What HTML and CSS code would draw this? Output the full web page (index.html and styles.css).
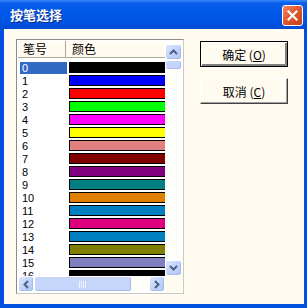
FILE: index.html
```html
<!DOCTYPE html>
<html lang="zh-CN">
<head>
	<meta charset="UTF-8">
	<title>按笔选择</title>
	<link rel="stylesheet" href="styles.css">
</head>
<body>

<div class="window">
	<div class="titlebar">
		<span class="title">按笔选择</span>
		<span class="close">
			<svg width="11" height="11" viewBox="0 0 11 11"><path d="M1.5 1.5 L9.5 9.5 M9.5 1.5 L1.5 9.5" stroke="#fff" stroke-width="2.2" stroke-linecap="square"/></svg>
		</span>
	</div>
	<div class="client">
		<div class="listview">
			<div class="lv-main">
				<div class="lv-header">
					<div class="hd-num">笔号</div>
					<div class="hd-color">颜色</div>
				</div>
				<div class="lv-rows">
					<div class="row selected"><span class="num">0</span><span class="bar" style="background:#000000"></span></div>
					<div class="row"><span class="num">1</span><span class="bar" style="background:#0000ff"></span></div>
					<div class="row"><span class="num">2</span><span class="bar" style="background:#ff0000"></span></div>
					<div class="row"><span class="num">3</span><span class="bar" style="background:#00ff00"></span></div>
					<div class="row"><span class="num">4</span><span class="bar" style="background:#ff00ff"></span></div>
					<div class="row"><span class="num">5</span><span class="bar" style="background:#ffff00"></span></div>
					<div class="row"><span class="num">6</span><span class="bar" style="background:#e08080"></span></div>
					<div class="row"><span class="num">7</span><span class="bar" style="background:#800000"></span></div>
					<div class="row"><span class="num">8</span><span class="bar" style="background:#800080"></span></div>
					<div class="row"><span class="num">9</span><span class="bar" style="background:#008080"></span></div>
					<div class="row"><span class="num">10</span><span class="bar" style="background:#e08000"></span></div>
					<div class="row"><span class="num">11</span><span class="bar" style="background:#0080c0"></span></div>
					<div class="row"><span class="num">12</span><span class="bar" style="background:#e0007f"></span></div>
					<div class="row"><span class="num">13</span><span class="bar" style="background:#0080c0"></span></div>
					<div class="row"><span class="num">14</span><span class="bar" style="background:#808000"></span></div>
					<div class="row"><span class="num">15</span><span class="bar" style="background:#8080c0"></span></div>
					<div class="row"><span class="num">16</span><span class="bar" style="background:#000000"></span></div>
				</div>
			</div>
			<div class="vscroll">
				<div class="sb-btn">
					<svg width="9" height="6" viewBox="0 0 9 6"><path d="M1 5 L4.5 1.5 L8 5" fill="none" stroke="#4d6185" stroke-width="2"/></svg>
				</div>
				<div class="sb-thumb-v"></div>
				<div class="sb-track"></div>
				<div class="sb-btn">
					<svg width="9" height="6" viewBox="0 0 9 6"><path d="M1 1 L4.5 4.5 L8 1" fill="none" stroke="#4d6185" stroke-width="2"/></svg>
				</div>
			</div>
			<div class="hscroll">
				<div class="sb-btn">
					<svg width="6" height="9" viewBox="0 0 6 9"><path d="M5 1 L1.5 4.5 L5 8" fill="none" stroke="#4d6185" stroke-width="2"/></svg>
				</div>
				<div class="sb-thumb-h">
					<svg width="8" height="7" viewBox="0 0 8 7"><path d="M0.5 0 V7 M2.5 0 V7 M4.5 0 V7 M6.5 0 V7" stroke="#eef4fe" stroke-width="1"/></svg>
				</div>
				<div class="sb-track"></div>
				<div class="sb-btn">
					<svg width="6" height="9" viewBox="0 0 6 9"><path d="M1 1 L4.5 4.5 L1 8" fill="none" stroke="#4d6185" stroke-width="2"/></svg>
				</div>
			</div>
			<div class="sb-corner"></div>
		</div>
		<div class="buttons">
			<button class="btn default">确定 (<u>O</u>)</button>
			<button class="btn">取消 (<u>C</u>)</button>
		</div>
	</div>
</div>

</body>
</html>
```

FILE: styles.css
```css
body {
	margin: 0;
	font-family: "Liberation Sans", "Noto Sans CJK SC", sans-serif;
	font-size: 11px;
}
.window {
	width: 307px;
	height: 308px;
	display: flex;
	flex-direction: column;
	background: #0350e0;
}
.titlebar {
	height: 29px;
	flex: none;
	display: flex;
	align-items: center;
	justify-content: space-between;
	padding: 0 4px 0 10px;
	background: linear-gradient(to bottom, #3a8cff 0px, #0a5fe9 3px, #0058e8 12px, #0054e2 22px, #0049d4 29px);
}
.title {
	color: #fff;
	font-family: "Noto Sans CJK SC", sans-serif;
	font-weight: bold;
	font-size: 13px;
	text-shadow: 1px 1px #0b2a8a;
}
.close {
	width: 19px;
	height: 19px;
	display: flex;
	align-items: center;
	justify-content: center;
	border: 1px solid #fff;
	border-radius: 3px;
	background: linear-gradient(135deg, #f08a6a 0%, #e05a2e 45%, #c43d17 100%);
	margin-top: 1px;
}
.client {
	flex: 1;
	margin: 0 3px 4px 4px;
	background: #fffbf0;
	display: flex;
	align-items: flex-start;
	padding: 10px 0 0 12px;
	gap: 16px;
}

/* list view */
.listview {
	width: 168px;
	height: 255px;
	box-sizing: border-box;
	border: 1px solid #8d8d8d;
	border-right-color: #c8c8c8;
	border-bottom-color: #c8c8c8;
	padding: 1px;
	background: #fff;
	display: grid;
	grid-template-columns: 147px 17px;
	grid-template-rows: 235px 16px;
	overflow: hidden;
}
.lv-main {
	overflow: hidden;
}
.lv-header {
	display: flex;
	height: 17px;
	box-sizing: border-box;
	background: #fffbf0;
	border-bottom: 1px solid #aca899;
	font-family: "Noto Sans CJK SC", sans-serif;
	font-size: 12px;
	line-height: 16px;
	color: #000;
}
.hd-num {
	width: 48px;
	flex: none;
	box-sizing: border-box;
	padding-left: 5px;
	border-right: 1px solid #aca899;
}
.hd-color {
	padding-left: 6px;
}
.lv-rows {
	padding-top: 3px;
}
.row {
	display: flex;
	align-items: center;
	height: 13px;
}
.num {
	width: 47px;
	flex: none;
	margin-left: 2px;
	box-sizing: border-box;
	padding-left: 2px;
	height: 12px;
	line-height: 12px;
	color: #000;
}
.row.selected .num {
	background: #316ac5;
	color: #fff;
}
.bar {
	flex: none;
	width: 100px;
	height: 11px;
	box-sizing: border-box;
	margin-left: 2px;
	border: 1px solid #000;
}

/* scroll bars */
.vscroll {
	display: flex;
	flex-direction: column;
	background: #fdfdfa;
	padding-top: 3px;
}
.hscroll {
	display: flex;
	background: #fdfdfa;
}
.sb-btn {
	width: 17px;
	height: 16px;
	flex: none;
	box-sizing: border-box;
	display: flex;
	align-items: center;
	justify-content: center;
	border: 1px solid #fff;
	border-radius: 3px;
	background: linear-gradient(135deg, #dbe6fc 0%, #c2d4fa 50%, #b2c7f4 100%);
	box-shadow: inset -1px -1px #a6b9e6;
}
.hscroll .sb-btn {
	width: 16px;
	height: 16px;
}
.sb-thumb-v {
	height: 10px;
	flex: none;
	box-sizing: border-box;
	border: 1px solid #fff;
	border-radius: 3px;
	background: #c6d6fb;
	box-shadow: inset -1px -1px #a6b9e6;
}
.sb-thumb-h {
	width: 98px;
	flex: none;
	box-sizing: border-box;
	display: flex;
	align-items: center;
	justify-content: center;
	border: 1px solid #fff;
	border-radius: 3px;
	background: #c6d6fb;
	box-shadow: inset -1px -1px #a6b9e6;
}
.sb-track {
	flex: 1;
}
.sb-corner {
	background: #fffbf0;
}

/* buttons */
.buttons {
	display: flex;
	flex-direction: column;
	gap: 11px;
	margin-top: 2px;
}
.btn {
	width: 88px;
	height: 26px;
	box-sizing: border-box;
	padding: 0;
	font-family: "Noto Sans CJK SC", sans-serif;
	font-size: 12px;
	color: #000;
	background: #fffbf0;
	border: 1px solid;
	border-color: #fff #404040 #404040 #fff;
	box-shadow: inset -1px -1px #a0a0a0;
}
.btn.default {
	border: 1px solid #000;
	box-shadow: inset 1px 1px #fff, inset -2px -2px #808080;
}
```
